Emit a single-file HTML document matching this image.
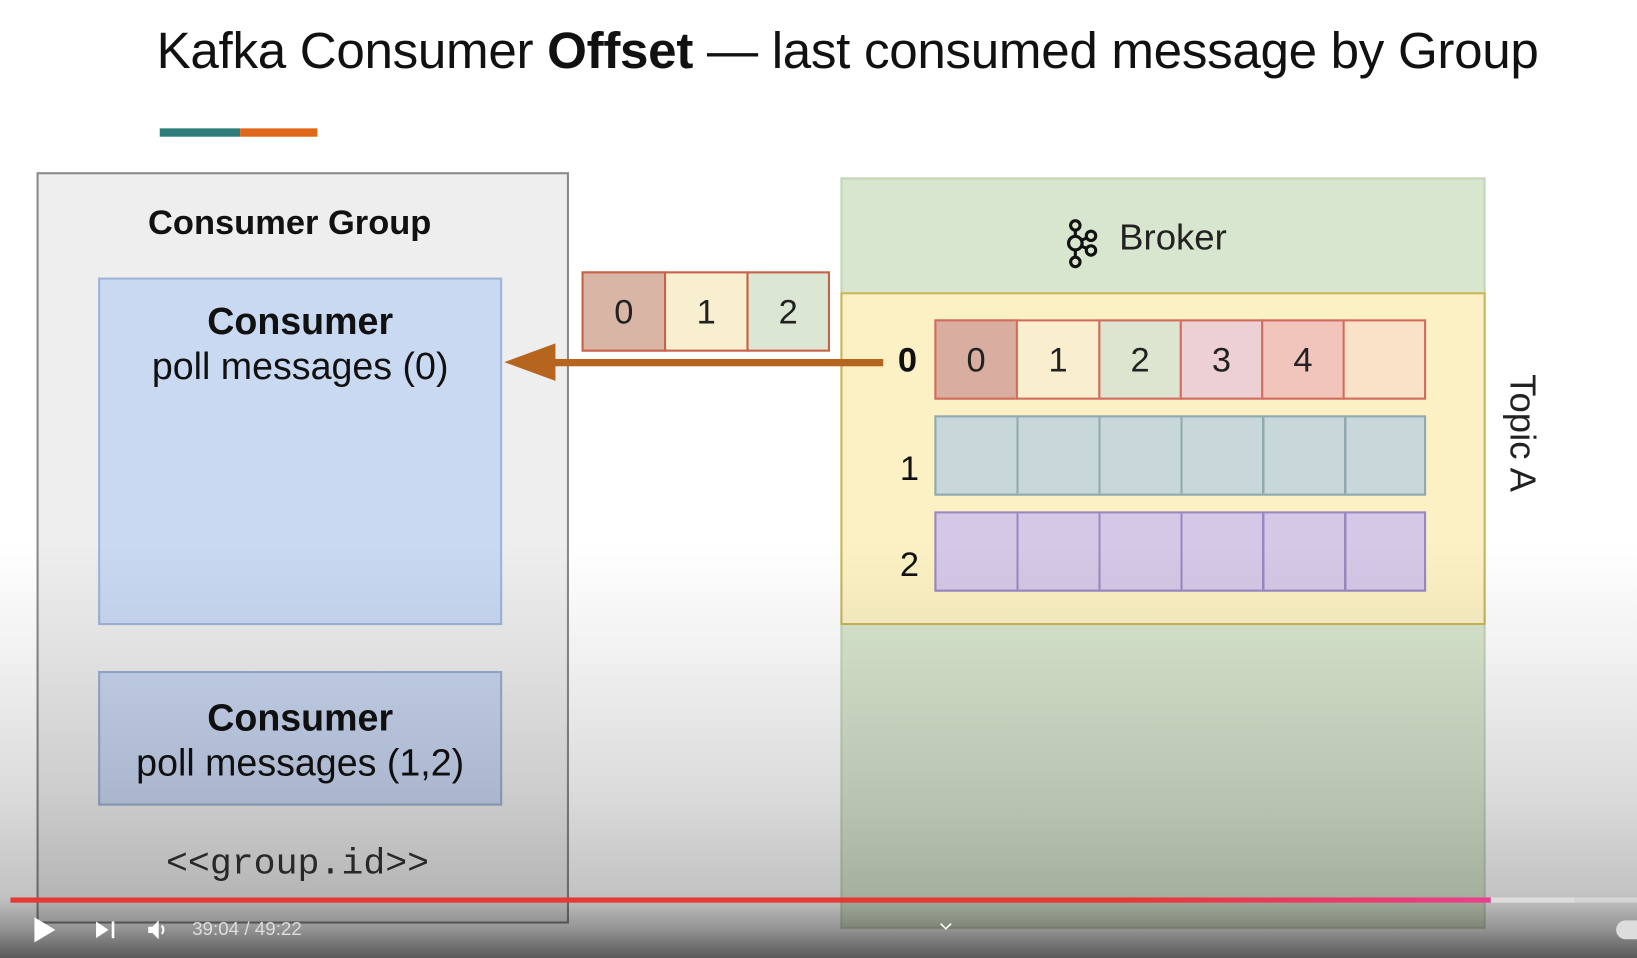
<!DOCTYPE html>
<html><head><meta charset="utf-8"><style>
html,body{margin:0;padding:0;width:1637px;height:958px;overflow:hidden;background:#fff}
#s{position:absolute;left:0;top:0;width:1568px;height:918px;transform:scale(1.04401,1.04357);transform-origin:0 0;font-family:"Liberation Sans",sans-serif;background:#fff}
.a{position:absolute}
.c{position:absolute;box-sizing:border-box;display:flex;align-items:center;justify-content:center;font-size:33px;color:#222}
</style></head><body><div id="s">
<div class="a" style="left:150px;top:21px;font-size:49px;color:#111;white-space:nowrap;letter-spacing:-0.3px">Kafka Consumer <b>Offset</b> — last consumed message by Group</div>
<div class="a" style="left:153px;top:123px;width:77px;height:8px;background:#2e7d7a"></div>
<div class="a" style="left:230px;top:123px;width:74px;height:8px;background:#e0661a"></div>

<div class="a" style="left:35px;top:165px;width:510px;height:720px;box-sizing:border-box;border:2px solid #8a8a8a;background:#eeeeee"></div>
<div class="a" style="left:35px;top:194px;width:485px;text-align:center;font-size:33px;font-weight:bold;color:#111">Consumer Group</div>
<div class="a" style="left:94px;top:266px;width:387px;height:333px;box-sizing:border-box;border:2px solid #9fb5d8;background:#c9d9f2;text-align:center;font-size:36px;color:#111;padding-top:18px;line-height:43px"><b>Consumer</b><br>poll messages (0)</div>
<div class="a" style="left:94px;top:643px;width:387px;height:129px;box-sizing:border-box;border:2px solid #9aaed0;background:#c8d6f0;text-align:center;font-size:36px;color:#111;padding-top:21px;line-height:43px"><b>Consumer</b><br>poll messages (1,2)</div>
<div class="a" style="left:35px;top:808px;width:500px;text-align:center;font-family:'Liberation Mono',monospace;font-size:35px;color:#333">&lt;&lt;group.id&gt;&gt;</div>

<div class="c" style="left:557px;top:260px;width:81px;height:77px;border:2px solid #c9604a;background:#d9b5a6">0</div>
<div class="c" style="left:636px;top:260px;width:81px;height:77px;border:2px solid #c9604a;background:#f7efcf">1</div>
<div class="c" style="left:715px;top:260px;width:80px;height:77px;border:2px solid #c9604a;background:#dce7d3">2</div>

<div class="a" style="left:805px;top:170px;width:618px;height:720px;box-sizing:border-box;border:2px solid #c5d6b5;background:#d9e6cf"></div>
<svg class="a" style="left:1018px;top:206px" width="40" height="56" fill="none" stroke="#111" stroke-width="3"><circle cx="12" cy="10" r="4.5"/><circle cx="12" cy="27" r="6.5"/><circle cx="12" cy="45" r="4.5"/><circle cx="27" cy="20" r="4.5"/><circle cx="27" cy="34" r="4.5"/><path d="M12 14.5v6M12 33.5v7M18 24l5-2M18 30l5 2"/></svg>
<div class="a" style="left:1072px;top:208px;font-size:35px;color:#222">Broker</div>

<div class="a" style="left:805px;top:280px;width:618px;height:319px;box-sizing:border-box;border:2px solid #c9b55a;background:#fbf1c4"></div>
<svg class="a" style="left:480px;top:325px" width="370" height="45"><rect x="48" y="19" width="318" height="7" fill="#b5651d"/><polygon points="3,22 52,4 52,40" fill="#b5651d"/></svg>
<div class="a" style="left:860px;top:326px;font-size:33px;font-weight:bold;color:#111">0</div>
<div class="a" style="left:862px;top:430px;font-size:33px;color:#111">1</div>
<div class="a" style="left:862px;top:522px;font-size:33px;color:#111">2</div>
<div class="a" style="left:1398px;top:395px;font-size:35px;color:#222;transform:rotate(90deg);white-space:nowrap;width:120px;text-align:center">Topic A</div>

<div class="c" style="left:895px;top:306px;width:80px;height:77px;border:2px solid #d36b5c;background:#d9aea0">0</div>
<div class="c" style="left:973px;top:306px;width:81px;height:77px;border:2px solid #d36b5c;background:#f9efcf">1</div>
<div class="c" style="left:1052px;top:306px;width:80px;height:77px;border:2px solid #d36b5c;background:#dce5d0">2</div>
<div class="c" style="left:1130px;top:306px;width:80px;height:77px;border:2px solid #d36b5c;background:#ecd0d3">3</div>
<div class="c" style="left:1208px;top:306px;width:80px;height:77px;border:2px solid #d36b5c;background:#f1c5bc">4</div>
<div class="c" style="left:1286px;top:306px;width:80px;height:77px;border:2px solid #d36b5c;background:#f9e2c8"></div>

<div class="a" style="left:895px;top:398px;width:471px;height:77px;box-sizing:border-box;border:2px solid #8fa9ae;background:#c8d8da;background-image:repeating-linear-gradient(90deg,transparent 0 76.5px,#8fa9ae 76.5px 78.5px)"></div>
<div class="a" style="left:895px;top:490px;width:471px;height:77px;box-sizing:border-box;border:2px solid #9a87c0;background:#d4c8e6;background-image:repeating-linear-gradient(90deg,transparent 0 76.5px,#9a87c0 76.5px 78.5px)"></div>

<div class="a" style="left:0;top:0;width:1568px;height:918px;background:linear-gradient(180deg,rgba(0,0,0,0) 0,rgba(0,0,0,0) 520px,rgba(0,0,0,0.05) 620px,rgba(0,0,0,0.14) 760px,rgba(0,0,0,0.24) 860px,rgba(0,0,0,0.42) 890px,rgba(0,0,0,0.65) 918px)"></div>

<div class="a" style="left:10px;top:860px;width:1418px;height:5px;background:linear-gradient(90deg,#e53935 0,#e53935 75%,#e8408f 100%)"></div>
<div class="a" style="left:1428px;top:860px;width:80px;height:5px;background:#ddd"></div>
<div class="a" style="left:1508px;top:860px;width:60px;height:5px;background:rgba(255,255,255,0.35)"></div>
<svg class="a" style="left:30px;top:878px" width="140" height="28" fill="#fff"><polygon points="3,1 23,13 3,25"/><polygon points="62,5 74,13 62,21"/><rect x="77" y="5" width="2.5" height="16"/><polygon points="112,10 116,10 122,4 122,22 116,16 112,16"/><path d="M125 9q3 4 0 8" stroke="#fff" stroke-width="2" fill="none"/></svg>
<div class="a" style="left:184px;top:880px;font-size:18px;color:#ddd">39:04 / 49:22</div>
<svg class="a" style="left:900px;top:884px" width="12" height="8"><path d="M1 1l5 5 5-5" stroke="#fff" stroke-width="1.5" fill="none"/></svg>
<div class="a" style="left:1548px;top:882px;width:30px;height:18px;border-radius:9px;background:#ddd"></div>
</div></body></html>
